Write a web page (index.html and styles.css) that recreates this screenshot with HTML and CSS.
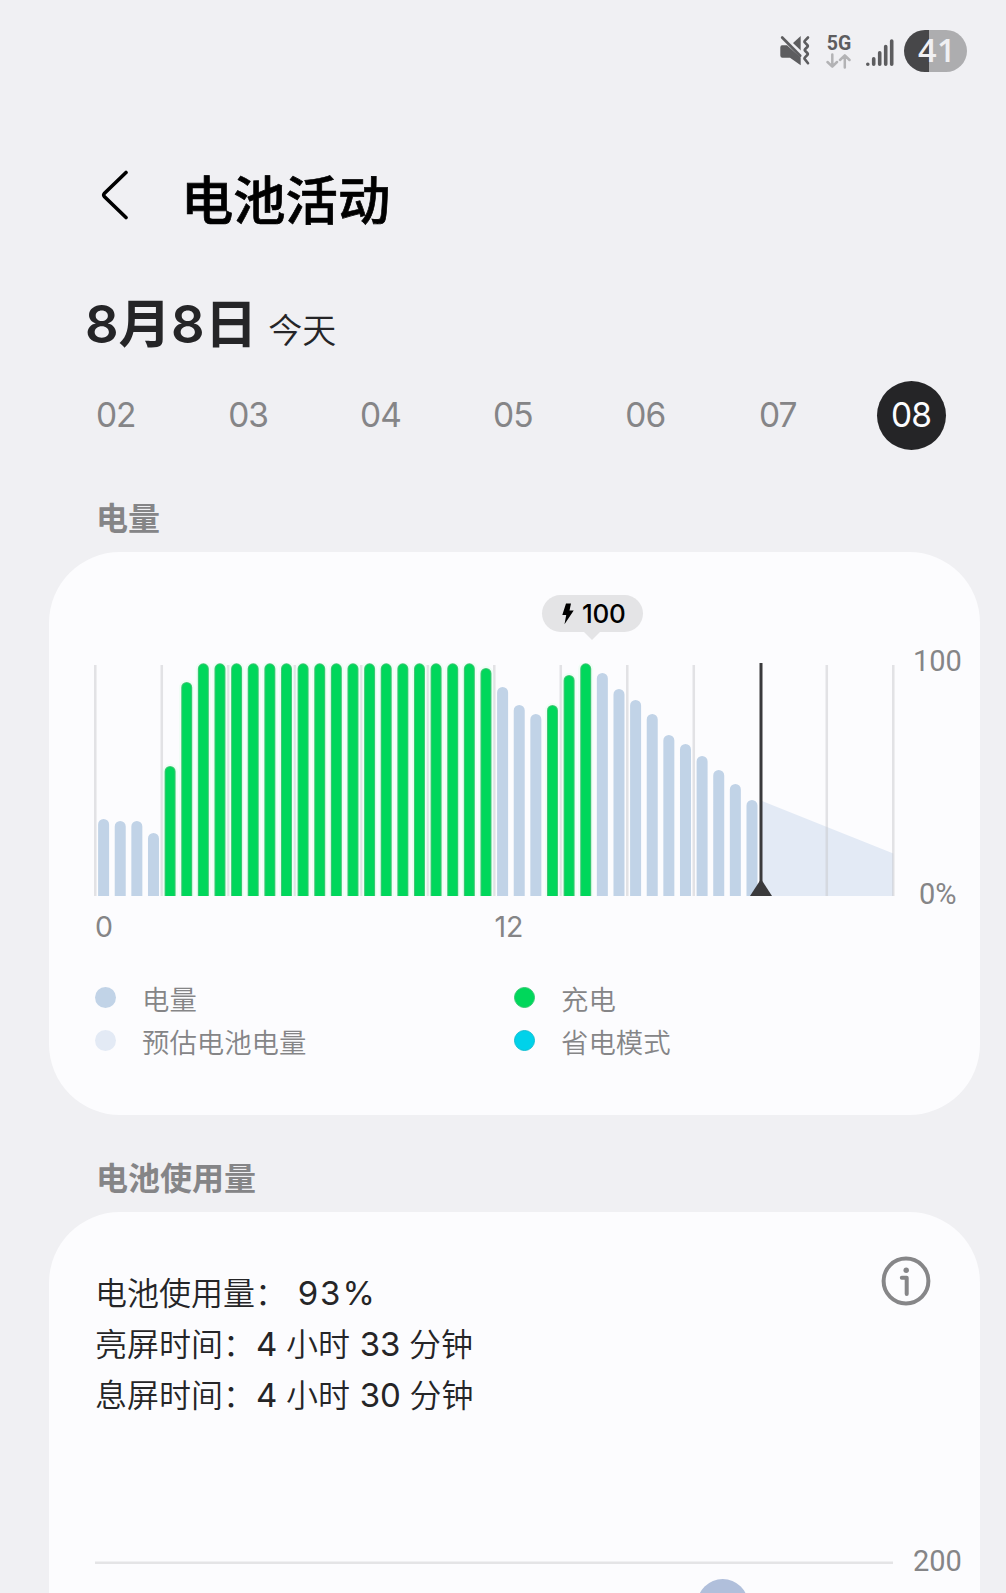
FILE: index.html
```html
<!DOCTYPE html>
<html lang="zh-CN">
<head>
<meta charset="utf-8">
<title>电池活动</title>
<link rel="stylesheet" href="styles.css">
</head>
<body>
<div class="screen">
  <div class="status-bar">
    <svg class="icon-mute" width="32" height="32" viewBox="0 0 32 32">
      <path d="M3 10.200H8L21.700 22.500V30.200L11 22.800H3.500Q1.300 22.800 1.300 20.600V12.400Q1.300 10.200 3 10.200Z" fill="#5d5d5f"/>
      <path d="M21.700 1V18L12.700 9.200Z" fill="#5d5d5f"/>
      <path d="M2 -.5L23.500 20" fill="none" stroke="#f0f0f3" stroke-width="2.400" transform="translate(2 .7)"/>
      <path d="M3.200 2.500L21.200 20.800" fill="none" stroke="#5d5d5f" stroke-width="2.700" stroke-linecap="round"/>
      <path d="M29 2.500L26 5.600Q25 6.700 26 7.700L28.300 10Q29.300 11 28.300 12L26.300 14Q25.300 15 26.300 16L28.300 18Q29.300 19 28.300 20L26 22.300Q25 23.300 26 24.400L29 28.200" fill="none" stroke="#5d5d5f" stroke-width="2.600" stroke-linecap="round"/>
    </svg>
    <div class="network">
      <span class="network-label">5G</span>
      <svg width="26" height="16" viewBox="0 0 26 16">
        <path d="M6.300 1.500V13.500M1.500 9L6.300 13.700L11 9M18.800 14.500V2.500M14 7L18.800 2.300L23.500 7" fill="none" stroke="#b3b3b5" stroke-width="2.500" stroke-linecap="round" stroke-linejoin="round"/>
      </svg>
    </div>
    <svg class="icon-signal" width="30" height="30" viewBox="0 0 30 30">
      <path d="M3.800 27.200V27.300M9.700 21.700V27.300M15.700 15.700V27.300M21.700 9.500V27.300M27.700 4V27.300" fill="none" stroke="#5d5d5f" stroke-width="3.600" stroke-linecap="round"/>
    </svg>
    <div class="battery">41</div>
  </div>

  <header class="title-bar">
    <svg width="30" height="52" viewBox="0 0 30 52">
      <path d="M25 3.500L3.300 24.500Q2.100 26 3.300 27.500L25 48.500" fill="none" stroke="#000" stroke-width="3.600" stroke-linecap="round"/>
    </svg>
    <h1 class="title">电池活动</h1>
  </header>

  <div class="date-heading">
    <span class="date-main">8月8日</span>
    <span class="date-note">今天</span>
  </div>

  <nav class="days">
    <span class="day">02</span>
    <span class="day">03</span>
    <span class="day">04</span>
    <span class="day">05</span>
    <span class="day">06</span>
    <span class="day">07</span>
    <span class="day day-selected">08</span>
  </nav>

  <h2 class="section-title">电量</h2>
  <section class="card level-card">
    <div class="bubble-row">
      <div class="bubble">
        <svg width="12" height="22" viewBox="0 0 12 22"><path d="M4 .5H9L7.500 7.500H11.700L2.500 21.300L4.200 12H.3Z" fill="#000"/></svg>
        <span>100</span>
      </div>
    </div>
    <div class="plot-row">
      <svg class="plot" width="801" height="233" viewBox="0 0 801 233">
        <path class="forecast" d="M667 137.500L799.300 190.500V233H667Z"/>
        <path class="grid-lines" d="M1.300 2V233M67.800 2V233M134.300 2V233M200.800 2V233M267.300 2V233M333.800 2V233M400.300 2V233M466.800 2V233M533.300 2V233M599.800 2V233M732.800 2V233M799.300 2V233"/>
        <g id="charging"></g>
        <path class="bars" id="level"/>
        <path class="now-line" d="M667 0V233"/>
        <path class="now-mark" d="M656 233L667 216L678 233Z"/>
      </svg>
      <div class="y-axis"><span>100</span><span class="y-zero">0%</span></div>
    </div>
    <div class="x-axis"><span>0</span><span>12</span></div>
    <div class="legend">
      <div class="legend-item"><i class="dot dot-level"></i>电量</div>
      <div class="legend-item"><i class="dot dot-charging"></i>充电</div>
      <div class="legend-item"><i class="dot dot-forecast"></i>预估电池电量</div>
      <div class="legend-item"><i class="dot dot-saver"></i>省电模式</div>
    </div>
  </section>

  <h2 class="section-title usage-title">电池使用量</h2>
  <section class="card usage-card">
    <div class="usage-head">
      <div class="usage-text">
        <p>电池使用量： <span class="num spaced">93%</span></p>
        <p>亮屏时间：<span class="num">4</span> 小时 <span class="num">33</span> 分钟</p>
        <p>息屏时间：<span class="num">4</span> 小时 <span class="num">30</span> 分钟</p>
      </div>
      <svg class="icon-info" width="50" height="50" viewBox="0 0 50 50">
        <circle cx="25" cy="25" r="22.400" fill="none" stroke="#868688" stroke-width="4"/>
        <circle cx="25.200" cy="14.300" r="2.700" fill="#868688"/>
        <path d="M20.800 21.800H25.700V38" fill="none" stroke="#868688" stroke-width="4" stroke-linecap="round" stroke-linejoin="round"/>
      </svg>
    </div>
    <div class="usage-plot">
      <svg width="801" height="32" viewBox="0 0 801 32">
        <path d="M1 1.700H799" stroke="#e4e4e6" stroke-width="2.600"/>
        <circle cx="628.700" cy="43.500" r="25.500" fill="#b0bfdb"/>
      </svg>
      <span class="usage-max">200</span>
    </div>
  </section>
</div>
<script src="chart.js"></script>
</body>
</html>
```
FILE: styles.css
```css
* { box-sizing: border-box; }
body {
  margin: 0;
  background: #f0f0f3;
  color: #252527;
  font-family: Inter, "Noto Sans CJK SC", sans-serif;
}
h1, h2, p { margin: 0; }
svg { display: block; flex: none; }
.screen { width: 1006px; height: 1593px; overflow: hidden; }

.status-bar {
  display: flex;
  height: 102px;
  padding: 30px 39px 0 779px;
}
.icon-mute { margin-top: 5px; }
.network { width: 26px; margin: 4px 0 0 15px; }
.network-label {
  display: block;
  height: 19px;
  color: #5d5d5f;
  font: 700 19.500px/19px Roboto, sans-serif;
  text-align: center;
}
.icon-signal { margin: 7px 0 0 12px; }
.battery {
  width: 63px;
  height: 42px;
  margin-left: auto;
  padding-left: 14px;
  border-radius: 21px;
  background: linear-gradient(90deg, #474749 25px, #adadaf 25px);
  color: #f0f0f3;
  font: 650 32.500px/40px "Open Sans", sans-serif;
  letter-spacing: .3px;
}

.title-bar {
  display: flex;
  height: 168px;
  padding: 67px 0 0 101px;
}
.title {
  height: 60px;
  margin: -2px 0 0 50px;
  color: #000;
  font: 500 52.300px/60px "Noto Sans CJK SC", sans-serif;
  -webkit-text-stroke: .7px #000;
}

.date-heading {
  display: flex;
  align-items: baseline;
  height: 111px;
  padding: 19px 0 0 85px;
  line-height: 70px;
}
.date-main { font-size: 52.500px; font-weight: 600; }
.date-note { margin-left: 11px; font-size: 34px; font-weight: 350; }

.days {
  display: grid;
  grid-template-columns: repeat(7, 132.400px);
  justify-items: center;
  height: 69px;
  padding-left: 50.500px;
}
.day {
  width: 69px;
  height: 69px;
  padding-right: 2px;
  border-radius: 50%;
  color: #858587;
  font-size: 33.500px;
  line-height: 69px;
  text-align: center;
  letter-spacing: -1px;
}
.day-selected { padding-right: 0; background: #252527; color: #fcfcfe; }

.section-title {
  height: 102px;
  padding: 42px 0 0 96px;
  color: #858587;
  font: 700 32px/48px "Noto Sans CJK SC", sans-serif;
}
.usage-title { height: 97px; padding-top: 37px; }

.card {
  width: 931.500px;
  margin-left: 48.500px;
  border-radius: 71px;
  background: #fcfcfe;
}
.level-card { height: 563px; padding: 43px 0 0 45.500px; }
.bubble-row { height: 68px; padding-left: 448px; }
.bubble {
  position: relative;
  display: flex;
  align-items: center;
  gap: 8px;
  width: 101px;
  height: 37px;
  padding-left: 20px;
  border-radius: 19px;
  background: #e4e4e6;
  color: #000;
  font-size: 26px;
  font-weight: 550;
  letter-spacing: -.3px;
}
.bubble::after {
  content: "";
  position: absolute;
  top: 100%;
  left: 42px;
  border: solid transparent;
  border-width: 8px 8px 0;
  border-top-color: #e4e4e6;
}
.plot-row { display: flex; height: 233px; }
.forecast { fill: #e3eaf5; }
.grid-lines { fill: none; stroke: #c8c8cc; stroke-opacity: .5; stroke-width: 2.500; }
.bars { fill: none; stroke: #c1d3e7; stroke-width: 11; stroke-linecap: round; }
.bars-halo { stroke: #e6ffee; stroke-width: 15; stroke-opacity: .6; }
.bars-edge { stroke: #43c676; }
.bars-core { stroke: #00d75b; stroke-width: 9; }
.now-line { stroke: #3a3a3c; stroke-width: 3; }
.now-mark { fill: #3a3a3c; }
.y-axis {
  display: flex;
  flex-direction: column;
  justify-content: space-between;
  margin: -19px 0 -15px 18px;
  color: #858587;
  font: 29px/34px Roboto, sans-serif;
}
.y-zero { padding-left: 6px; }
.x-axis {
  display: flex;
  height: 81px;
  padding: 14px 0 0 1px;
  color: #858587;
  font-size: 28.500px;
  line-height: 34px;
}
.x-axis span { width: 399.500px; }
.legend {
  display: grid;
  grid-template-columns: 419px 1fr;
  grid-auto-rows: 43px;
  padding-left: 1px;
}
.legend-item {
  display: flex;
  align-items: center;
  gap: 26px;
  color: #858587;
  font: 350 27.400px/43px "Noto Sans CJK SC", sans-serif;
}
.dot { width: 21px; height: 21px; margin-top: -3px; border-radius: 50%; }
.dot-level { background: #c1d3e7; }
.dot-charging { border: 1px solid #34c972; background: #00d75b; }
.dot-forecast { background: #e3eaf5; }
.dot-saver { border: 1px solid #12bfd2; background: #00d2ea; }

.usage-card { height: 470px; padding: 44px 0 0 45.500px; }
.usage-head { display: flex; justify-content: space-between; height: 305px; padding-right: 49px; }
.usage-text {
  padding: 10px 0 0 1px;
  font: 350 32px/51px "Noto Sans CJK SC", sans-serif;
  word-spacing: 1.500px;
}
.usage-text p { height: 51px; }
.num { margin-left: 1px; font-family: Inter, sans-serif; font-size: 33px; font-weight: 400; line-height: 1; }
.spaced { margin-left: 2px; letter-spacing: 2px; }
.usage-plot { display: flex; }
.usage-max {
  margin: -17px 0 0 18px;
  color: #858587;
  font: 29px/34px Roboto, sans-serif;
}
```
FILE: chart.js
```js
// Bar tops in plot units, one sample per half hour.
const tops = [156, 158, 158, 170, 103, 19];
for (let i = 6; i <= 22; i++) tops.push(0.3);
tops.push(5, 24, 42, 51, 42, 12, 0.3, 10, 26, 37, 51, 72, 81, 93, 107, 121, 137);

const isCharging = i => (i >= 4 && i <= 23) || (i >= 27 && i <= 29);
const bar = (top, i) => `M${9.6 + i * 16.625} ${top + 5.5}V245`;

document.getElementById('level').setAttribute('d',
  tops.map((t, i) => (isCharging(i) ? '' : bar(t, i))).join(''));

const chargingPath = tops.map((t, i) => (isCharging(i) ? bar(t, i) : '')).join('');
document.getElementById('charging').innerHTML = ['halo', 'edge', 'core']
  .map(part => `<path class="bars bars-${part}" d="${chargingPath}"/>`).join('');
```
